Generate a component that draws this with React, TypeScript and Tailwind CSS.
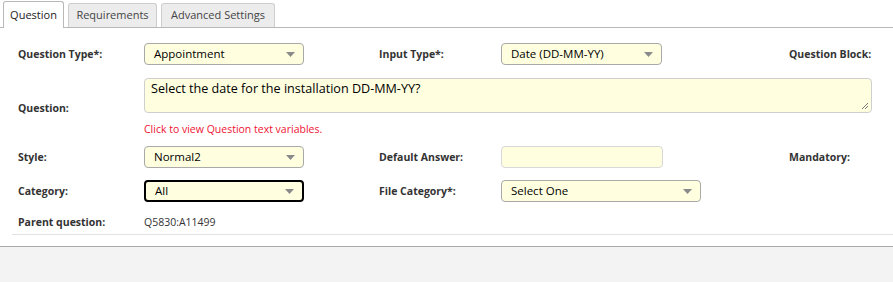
import { ReactNode } from 'react';

function Select({ value, width, focused }: { value: string; width: string; focused?: boolean }) {
  return (
    <div
      className={`${width} h-[22px] flex items-center justify-between pl-[9px] pr-[8px] rounded-[4px] bg-[#ffffe0] text-[11.5px] text-black ${
        focused ? 'border-2 border-black pl-[8px] pr-[7px]' : 'border border-[#a9a9a9]'
      }`}
    >
      <span>{value}</span>
      <svg width="9" height="5" viewBox="0 0 9 5">
        <path d="M0 0 L9 0 L4.5 5 Z" fill="#8a8a8a" />
      </svg>
    </div>
  );
}

function Label({ children, width, className = 'pt-[2px]' }: { children: ReactNode; width: string; className?: string }) {
  return <div className={`${width} shrink-0 text-[10.5px] font-bold text-[#333] ${className}`}>{children}</div>;
}

export default function App() {
  return (
    <div className="w-[893px] h-[282px] bg-white flex flex-col" style={{ fontFamily: '"Open Sans", "Noto Sans", sans-serif' }}>
      {/* Tabs */}
      <div className="flex items-end h-[28px] pl-[3px] gap-[4px] border-b border-[#b8b8b8]">
        <div className="h-[27px] -mb-px w-[61px] flex items-center justify-center bg-white border border-b-0 border-[#b8b8b8] rounded-t-[3px] text-[11px] text-[#222]">
          Question
        </div>
        <div className="h-[24px] w-[89px] flex items-center justify-center bg-[#ececec] border border-b-0 border-[#cdcdcd] rounded-t-[3px] text-[11px] text-[#444]">
          Requirements
        </div>
        <div className="h-[24px] w-[114px] flex items-center justify-center bg-[#ececec] border border-b-0 border-[#cdcdcd] rounded-t-[3px] text-[11px] text-[#444]">
          Advanced Settings
        </div>
      </div>

      {/* Form */}
      <div className="pl-[18px] pt-[15px] flex flex-col">
        <div className="flex items-center h-[22px]">
          <Label width="w-[126px]">Question Type*:</Label>
          <div className="w-[235px] shrink-0">
            <Select value="Appointment" width="w-[160px]" />
          </div>
          <Label width="w-[122px]">Input Type*:</Label>
          <div className="w-[288px] shrink-0">
            <Select value="Date (DD-MM-YY)" width="w-[161px]" />
          </div>
          <Label width="w-[100px]">Question Block:</Label>
        </div>

        <div className="flex items-center mt-[13px]">
          <Label width="w-[126px]" className="pt-[1px]">Question:</Label>
          <div className="flex flex-col">
            <div className="relative w-[728px] h-[35px] bg-[#ffffe0] border border-[#cfcfcf] rounded-[4px] px-[6px] pt-[1px] text-[12.6px] text-black">
              Select the date for the installation DD-MM-YY?
              <svg className="absolute right-[2px] bottom-[2px]" width="8" height="8" viewBox="0 0 8 8">
                <path d="M7 1 L1 7 M7 4 L4 7" stroke="#777" strokeWidth="1" />
              </svg>
            </div>
            <div className="mt-[9px] h-[16px] text-[10.5px] text-[#ee1432]">Click to view Question text variables.</div>
          </div>
        </div>

        <div className="flex items-center h-[22px] mt-[8px]">
          <Label width="w-[126px]">Style:</Label>
          <div className="w-[235px] shrink-0">
            <Select value="Normal2" width="w-[160px]" />
          </div>
          <Label width="w-[122px]">Default Answer:</Label>
          <div className="w-[288px] shrink-0">
            <div className="w-[162px] h-[22px] bg-[#ffffe0] border border-[#d8d8d8] rounded-[4px]" />
          </div>
          <Label width="w-[100px]">Mandatory:</Label>
        </div>

        <div className="flex items-center h-[22px] mt-[12px]">
          <Label width="w-[126px]">Category:</Label>
          <div className="w-[235px] shrink-0">
            <Select value="All" width="w-[160px]" focused />
          </div>
          <Label width="w-[122px]">File Category*:</Label>
          <div className="w-[288px] shrink-0">
            <Select value="Select One" width="w-[200px]" />
          </div>
        </div>

        <div className="flex items-center h-[16px] mt-[12px]">
          <Label width="w-[126px]">Parent question:</Label>
          <div className="text-[10.5px] text-[#333] pt-[1px]">Q5830:A11499</div>
        </div>
      </div>

      <div className="ml-[12px] mt-[4px] border-b border-[#e3e3e3]" />
      <div className="mt-[11px] flex-1 bg-[#f3f3f3] border-t border-[#aaaaaa]" />
    </div>
  );
}
